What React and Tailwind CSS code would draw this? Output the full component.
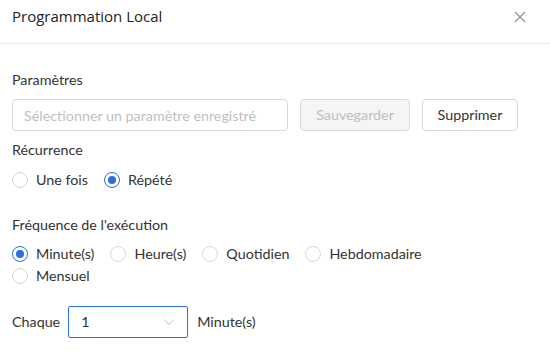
import React, { useState } from 'react';

const Radio = ({ label, checked, onClick }) => (
    <label onClick={onClick} className="flex items-center h-[22px] mr-4 cursor-pointer">
        <span
            className={`w-4 h-4 rounded-full border flex items-center justify-center shrink-0 ${
                checked ? 'border-[#2a6ee8]' : 'border-[#d9d9d9]'
            }`}
        >
            {checked && <span className="w-2 h-2 rounded-full bg-[#2a6ee8]" />}
        </span>
        <span className="ml-2 text-[14.3px] text-[#333]">{label}</span>
    </label>
);

const App = () => {
    const [recurrence, setRecurrence] = useState('repete');
    const [freq, setFreq] = useState('minute');

    const freqs = [
        ['minute', 'Minute(s)'],
        ['heure', 'Heure(s)'],
        ['quotidien', 'Quotidien'],
        ['hebdo', 'Hebdomadaire'],
        ['mensuel', 'Mensuel'],
    ];

    return (
        <div className="w-[550px] h-[351px] bg-white overflow-hidden" style={{ fontFamily: 'Lato, "Open Sans", sans-serif' }}>
            {/* En-tête */}
            <div className="h-[44px] flex items-center justify-between pl-3 pr-[24px] border-b border-[#ebebeb]">
                <h1 className="text-[15px] text-[#222] font-normal -mt-[10px] font-['Open_Sans',sans-serif]">Programmation Local</h1>
                <svg width="12" height="12" viewBox="0 0 12 12" className="-mt-[10px]">
                    <path d="M1 1L11 11M11 1L1 11" stroke="#8c8c8c" strokeWidth="1.1" />
                </svg>
            </div>

            <div className="px-3">
                {/* Paramètres */}
                <div className="mt-[25px] text-[14.3px] text-[#333] leading-[22px]">Paramètres</div>
                <div className="flex items-center mt-[8px]">
                    <input
                        placeholder="Sélectionner un paramètre enregistré"
                        className="w-[276px] h-[32px] px-[11px] border border-[#d9d9d9] rounded-[4px] text-[14.3px] placeholder-[#bfbfbf] outline-none"
                    />
                    <button disabled className="ml-3 w-[110px] h-[32px] border border-[#d9d9d9] bg-[#f5f5f5] rounded-[4px] text-[14.3px] text-[#bfbfbf]">
                        Sauvegarder
                    </button>
                    <button className="ml-3 w-[96px] h-[32px] border border-[#d9d9d9] bg-white rounded-[4px] text-[14.3px] text-[#333]">
                        Supprimer
                    </button>
                </div>

                {/* Récurrence */}
                <div className="mt-[8px] text-[14.3px] text-[#333] leading-[22px]">Récurrence</div>
                <div className="flex mt-[8px]">
                    <Radio label="Une fois" checked={recurrence === 'une'} onClick={() => setRecurrence('une')} />
                    <Radio label="Répété" checked={recurrence === 'repete'} onClick={() => setRecurrence('repete')} />
                </div>

                {/* Fréquence */}
                <div className="mt-[23px] text-[14.3px] text-[#333] leading-[22px]">Fréquence de l'exécution</div>
                <div className="flex flex-wrap w-[470px] mt-[7px]">
                    {freqs.map(([k, l]) => (
                        <Radio key={k} label={l} checked={freq === k} onClick={() => setFreq(k)} />
                    ))}
                </div>

                {/* Chaque */}
                <div className="flex items-center mt-[19px]">
                    <span className="text-[14.3px] text-[#333]">Chaque</span>
                    <div className="ml-[8px] w-[120px] h-[32px] border border-[#2a6ee8] rounded-[2px] flex items-center justify-between px-[12px]">
                        <span className="text-[14.3px] text-[#333]">1</span>
                        <svg width="12" height="8" viewBox="0 0 12 8">
                            <path d="M1 1.5L6 6.5L11 1.5" fill="none" stroke="#bfbfbf" strokeWidth="1" />
                        </svg>
                    </div>
                    <span className="ml-[9px] text-[14.3px] text-[#333]">Minute(s)</span>
                </div>
            </div>
        </div>
    );
};

export default App;
